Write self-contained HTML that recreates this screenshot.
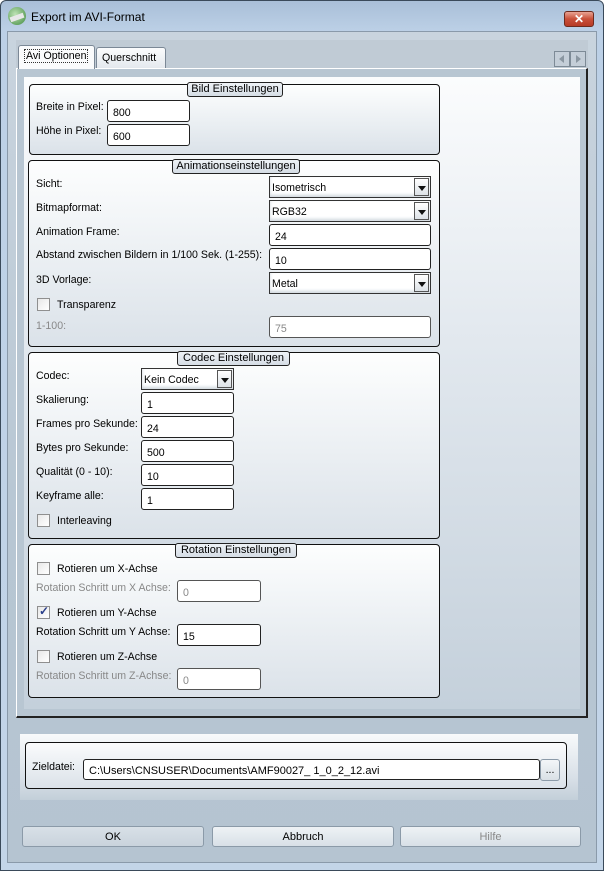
<!DOCTYPE html>
<html><head><meta charset="utf-8"><style>
*{box-sizing:border-box;margin:0;padding:0}
body{width:604px;height:871px;overflow:hidden;font-family:"Liberation Sans",Arial,sans-serif;font-size:10.6px;color:#000;background:#fff;position:relative}
.a{position:absolute}
#win{left:0;top:0;width:604px;height:871px;background:linear-gradient(#a9bfd8,#bcd0e6 30px,#c3d5e8);border:1px solid #3a4a5a;border-radius:6px 6px 0 0}
#client{left:7px;top:31px;width:590px;height:832px;background:linear-gradient(#c9d4de,#b7c6d3 60%,#b5c4d1);border:1px solid #8a9aaa}
#strip{left:16px;top:40px;width:572px;height:30px;background:#c0cbd5}
.tab{background:linear-gradient(#fbfcfd,#e4e9ee);border:1px solid #7b8896;border-bottom:none;border-radius:3px 3px 0 0;padding:4px 0 0 5px;white-space:nowrap}
#page{left:16px;top:68px;width:572px;height:650px;background:#b8c6d2;border-top:1px solid #fff;border-left:1px solid #fff;border-right:2px solid #222;border-bottom:2px solid #222}
#pagein{left:24px;top:77px;width:556px;height:632px;background:linear-gradient(#fbfcfd,#e3e9ef 40%,#c4d0db)}
.g{border:1px solid #111;border-radius:4px;background:linear-gradient(#fdfefe,#dbe2e9)}
.lg{border:1px solid #222;border-radius:3px;background:linear-gradient(#eef2f6,#d5dde5);text-align:center;font-size:11px;line-height:13px;height:15px;white-space:nowrap}
.t{background:#fff;border:1px solid #222;border-radius:3px;padding:6px 0 0 5px;height:22px;font-size:10.6px;white-space:nowrap}
.dis{color:#888;border-color:#555}
.cb{background:#fff;border:1px solid #333;padding:5px 0 0 2px;height:22px;box-shadow:inset 0 -2px 3px #cfd6dd}
.cb i{position:absolute;right:1px;top:1px;width:15px;height:18px;background:linear-gradient(#fff,#dde2e7);border:1px solid #555}
.cb i:after{content:"";position:absolute;left:3px;top:7px;border-left:4px solid transparent;border-right:4px solid transparent;border-top:5px solid #111}
.l{font-size:10.6px;white-space:nowrap}
.gr{color:#888}
.ck{width:13px;height:13px;border:1px solid #8f8f8f;background:linear-gradient(135deg,#e8e8e8,#fff)}
.btn{height:21px;border:1px solid #8b9aa8;border-radius:3px;background:linear-gradient(#eef2f5,#d8e0e7);text-align:center;padding-top:4px;font-size:11px}
</style></head><body>
<div class="a" id="win"></div>
<div class="a" style="left:8px;top:7px;width:18px;height:18px;border-radius:50%;background:radial-gradient(circle at 40% 40%,#bfe3b5,#3f8a3f);"></div>
<div class="a" style="left:10px;top:15px;width:14px;height:5px;background:#e8e8e8;transform:rotate(-20deg)"></div>
<div class="a" style="left:31px;top:10px;font-size:12px">Export im AVI-Format</div>
<div class="a" style="left:564px;top:11px;width:30px;height:16px;border:1px solid #6d2a1e;border-radius:3px;background:linear-gradient(#e9a495,#c9503a 50%,#b63a25);color:#fff;font-weight:bold;font-size:12px;text-align:center;line-height:14px">✕</div>
<div class="a" id="client"></div>
<div class="a" id="strip"></div>
<div class="a" id="page"></div>
<div class="a" id="pagein"></div>
<div class="a tab" style="left:18px;top:45px;width:77px;height:24px;background:#fafbfc"><span style="border:1px dotted #333;padding:0 1px">Avi Optionen</span></div>
<div class="a tab" style="left:96px;top:47px;width:70px;height:21px;padding-left:5px">Querschnitt</div>
<div class="a" style="left:554px;top:51px;width:16px;height:16px;border:1px solid #7d8a96;background:#c4ced8"><div class="a" style="left:4px;top:3px;border-top:4px solid transparent;border-bottom:4px solid transparent;border-right:5px solid #8a96a1"></div></div>
<div class="a" style="left:570px;top:51px;width:16px;height:16px;border:1px solid #7d8a96;background:#c4ced8"><div class="a" style="left:5px;top:3px;border-top:4px solid transparent;border-bottom:4px solid transparent;border-left:5px solid #8a96a1"></div></div>

<!-- Bild -->
<div class="a g" style="left:29px;top:84px;width:411px;height:71px"></div>
<div class="a lg" style="left:187px;top:82px;width:96px">Bild Einstellungen</div>
<div class="a l" style="left:36px;top:101px">Breite in Pixel:</div>
<div class="a t" style="left:107px;top:100px;width:83px">800</div>
<div class="a l" style="left:36px;top:125px">Höhe in Pixel:</div>
<div class="a t" style="left:107px;top:124px;width:83px">600</div>

<!-- Anim -->
<div class="a g" style="left:28px;top:160px;width:412px;height:187px"></div>
<div class="a lg" style="left:172px;top:159px;width:128px">Animationseinstellungen</div>
<div class="a l" style="left:36px;top:178px">Sicht:</div>
<div class="a cb" style="left:269px;top:176px;width:162px">Isometrisch<i></i></div>
<div class="a l" style="left:36px;top:202px">Bitmapformat:</div>
<div class="a cb" style="left:269px;top:200px;width:162px">RGB32<i></i></div>
<div class="a l" style="left:36px;top:226px">Animation Frame:</div>
<div class="a t" style="left:269px;top:224px;width:162px">24</div>
<div class="a l" style="left:36px;top:249px">Abstand zwischen Bildern in 1/100 Sek. (1-255):</div>
<div class="a t" style="left:269px;top:248px;width:162px">10</div>
<div class="a l" style="left:36px;top:274px">3D Vorlage:</div>
<div class="a cb" style="left:269px;top:272px;width:162px">Metal<i></i></div>
<div class="a ck" style="left:37px;top:298px"></div>
<div class="a l" style="left:57px;top:299px">Transparenz</div>
<div class="a l gr" style="left:36px;top:320px">1-100:</div>
<div class="a t dis" style="left:269px;top:316px;width:162px">75</div>

<!-- Codec -->
<div class="a g" style="left:28px;top:352px;width:412px;height:187px"></div>
<div class="a lg" style="left:177px;top:351px;width:113px">Codec Einstellungen</div>
<div class="a l" style="left:36px;top:370px">Codec:</div>
<div class="a cb" style="left:141px;top:368px;width:93px">Kein Codec<i></i></div>
<div class="a l" style="left:36px;top:394px">Skalierung:</div>
<div class="a t" style="left:141px;top:392px;width:93px">1</div>
<div class="a l" style="left:36px;top:418px">Frames pro Sekunde:</div>
<div class="a t" style="left:141px;top:416px;width:93px">24</div>
<div class="a l" style="left:36px;top:442px">Bytes pro Sekunde:</div>
<div class="a t" style="left:141px;top:440px;width:93px">500</div>
<div class="a l" style="left:36px;top:466px">Qualität (0 - 10):</div>
<div class="a t" style="left:141px;top:464px;width:93px">10</div>
<div class="a l" style="left:36px;top:490px">Keyframe alle:</div>
<div class="a t" style="left:141px;top:488px;width:93px">1</div>
<div class="a ck" style="left:37px;top:514px"></div>
<div class="a l" style="left:57px;top:515px">Interleaving</div>

<!-- Rotation -->
<div class="a g" style="left:28px;top:544px;width:412px;height:154px"></div>
<div class="a lg" style="left:175px;top:543px;width:122px">Rotation Einstellungen</div>
<div class="a ck" style="left:37px;top:562px"></div>
<div class="a l" style="left:57px;top:563px">Rotieren um X-Achse</div>
<div class="a l gr" style="left:36px;top:582px">Rotation Schritt um X Achse:</div>
<div class="a t dis" style="left:177px;top:580px;width:84px">0</div>
<div class="a ck" style="left:37px;top:606px"><span class="a" style="left:1px;top:-3px;color:#2a3f8a;font-size:12px;font-weight:bold">✓</span></div>
<div class="a l" style="left:57px;top:607px">Rotieren um Y-Achse</div>
<div class="a l" style="left:36px;top:626px">Rotation Schritt um Y Achse:</div>
<div class="a t" style="left:177px;top:624px;width:84px">15</div>
<div class="a ck" style="left:37px;top:650px"></div>
<div class="a l" style="left:57px;top:651px">Rotieren um Z-Achse</div>
<div class="a l gr" style="left:36px;top:670px">Rotation Schritt um Z-Achse:</div>
<div class="a t dis" style="left:177px;top:668px;width:84px">0</div>

<!-- Bottom -->
<div class="a" style="left:20px;top:734px;width:558px;height:66px;background:linear-gradient(#f8fafb,#d6dee6 70%,#c3cfd9)"></div>
<div class="a g" style="left:25px;top:742px;width:542px;height:47px;background:linear-gradient(#fafbfc,#dbe2e9)"></div>
<div class="a l" style="left:32px;top:761px">Zieldatei:</div>
<div class="a t" style="left:83px;top:759px;width:457px;height:21px;padding-top:5px;font-size:11px">C:\Users\CNSUSER\Documents\AMF90027_ 1_0_2_12.avi</div>
<div class="a" style="left:540px;top:759px;width:20px;height:22px;border:1px solid #8b9aa8;border-radius:3px;background:linear-gradient(#f3f6f8,#d9e0e6);text-align:center;padding-top:4px">...</div>
<div class="a btn" style="left:22px;top:826px;width:182px;background:linear-gradient(#d8e0e7,#c9d3dc)">OK</div>
<div class="a btn" style="left:212px;top:826px;width:182px">Abbruch</div>
<div class="a btn" style="left:400px;top:826px;width:181px;color:#888">Hilfe</div>
</body></html>
